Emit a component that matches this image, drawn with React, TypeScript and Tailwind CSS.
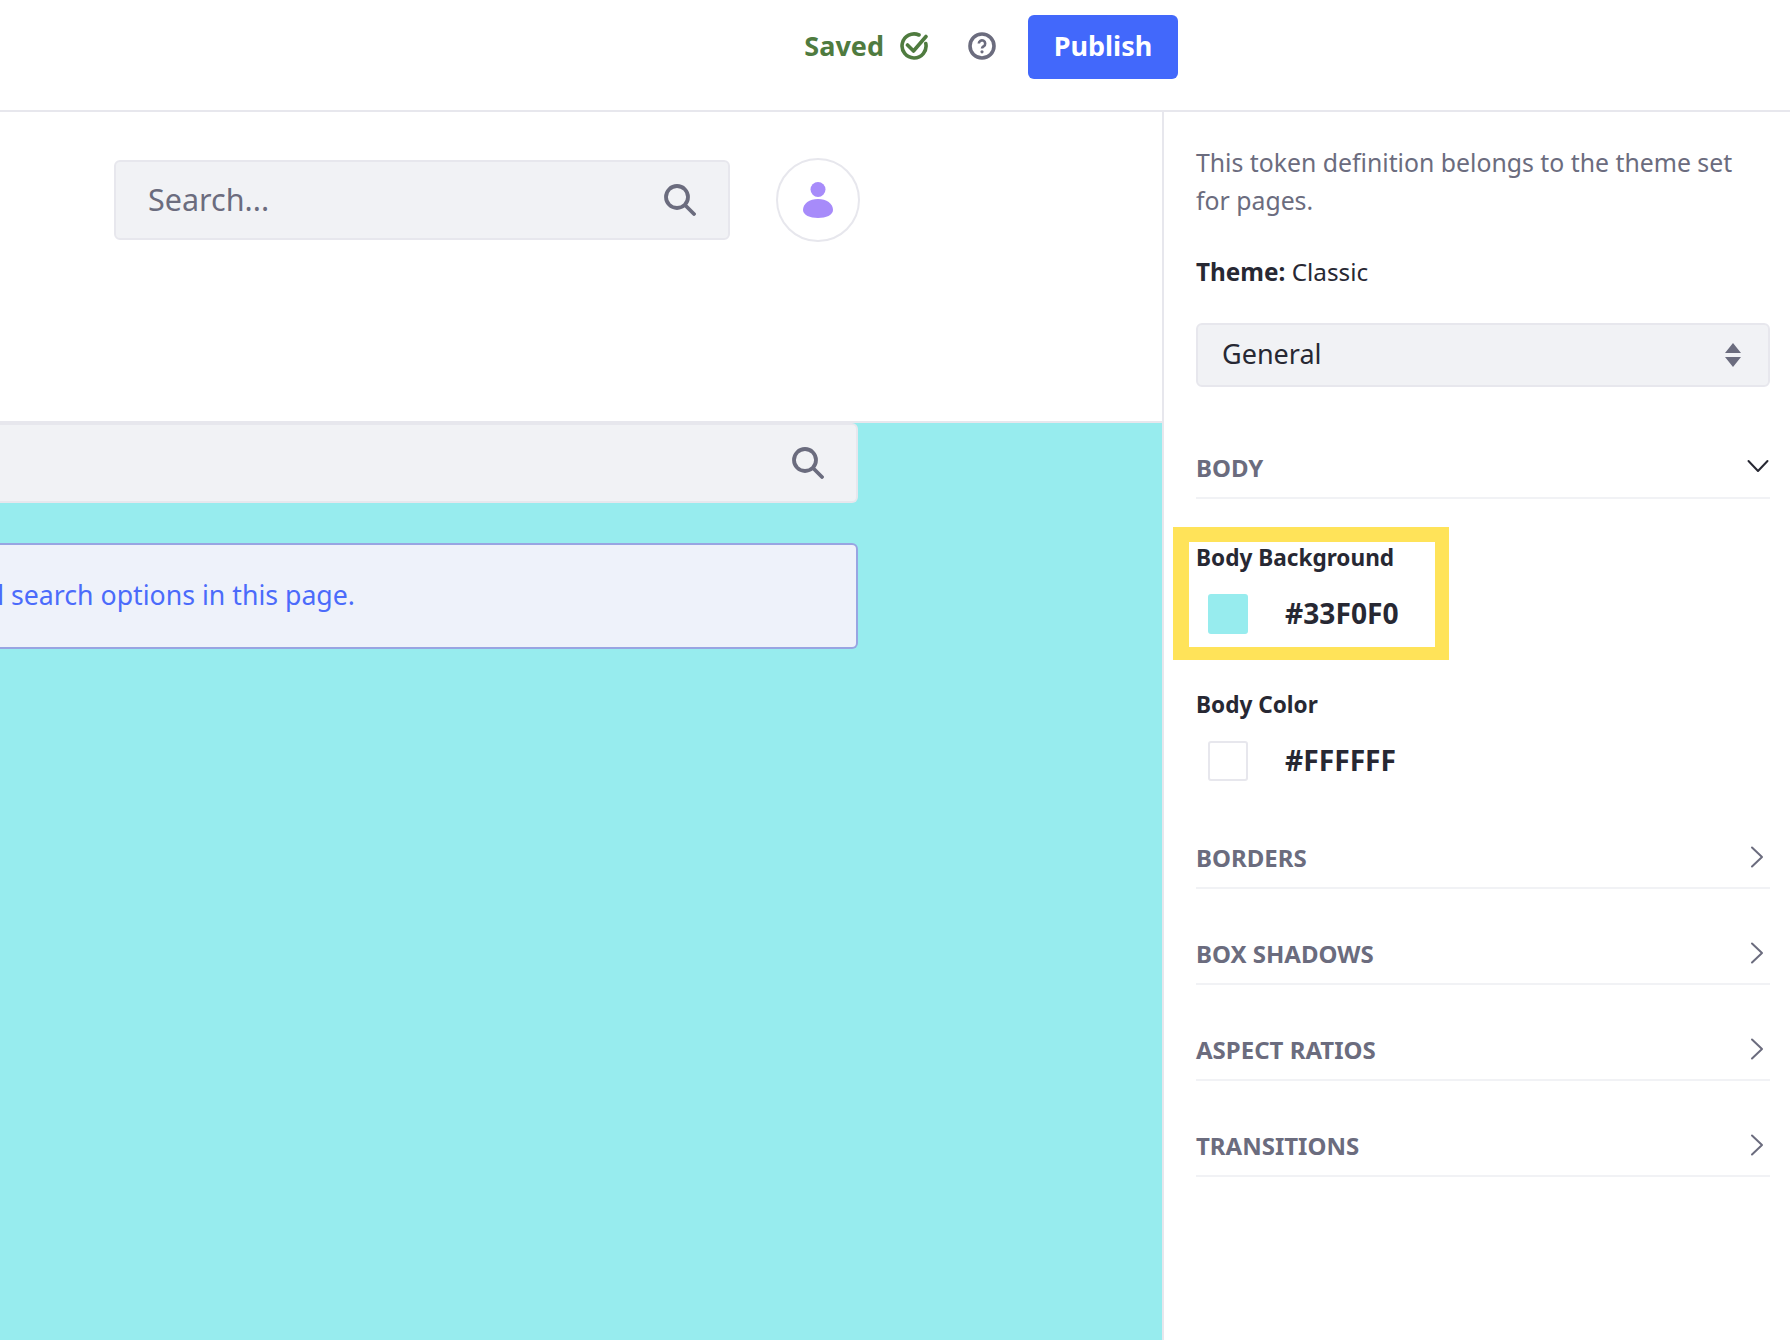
const FONT = "font-['Noto_Sans',sans-serif]";

function SearchIcon({ className }: { className?: string }) {
  return (
    <svg viewBox="0 0 32 32" className={className} fill="none" stroke="#6b6c7e" strokeWidth="3.8" strokeLinecap="round">
      <circle cx="13" cy="13" r="11" />
      <path d="M21.5 21.5 30 30" />
    </svg>
  );
}

function ChevronRight() {
  return (
    <svg viewBox="0 0 14 22" className="h-[22px] w-[14px] mr-[6px] -mt-[2px]" fill="none" stroke="#6b6c7e" strokeWidth="2" strokeLinecap="round" strokeLinejoin="round">
      <path d="M2 1.5 12 11 2 20.5" />
    </svg>
  );
}

function Section({ label }: { label: string }) {
  return (
    <div className="flex h-[96px] items-end">
      <div className="flex h-[60px] w-full items-center justify-between border-b-2 border-[#f1f2f5] pb-[1px]">
        <span className="text-[24px] font-bold text-[#6b6c7e]">{label}</span>
        <ChevronRight />
      </div>
    </div>
  );
}

function Token({ label, value, swatch }: { label: string; value: string; swatch: string }) {
  return (
    <div className="w-[240px]">
      <div className="h-[30px] whitespace-nowrap pt-[1px] text-[22.6px] font-bold leading-[30px] text-[#272833]">{label}</div>
      <div className="mt-[22px] flex items-center gap-[37px] pl-[12px]">
        <span className={`h-[40px] w-[40px] rounded-[3px] ${swatch}`} />
        <span className="-mt-[2px] text-[28.2px] font-bold leading-[38px] text-[#272833]">{value}</span>
      </div>
    </div>
  );
}

export default function App() {
  return (
    <div className={`flex h-[1340px] w-[1790px] flex-col overflow-hidden bg-white ${FONT}`}>
      <header className="flex h-[112px] shrink-0 items-center justify-end border-b-2 border-[#e7e7ed] pr-[612px] pb-[16px]">
        <span className="-mt-[2px] text-[27px] font-bold text-[#4f7b3f]">Saved</span>
        <svg viewBox="0 0 28 28" className="-mt-[2px] ml-[16px] h-[28px] w-[28px]" fill="none" stroke="#4f7b3f" strokeWidth="3.6" strokeLinecap="round" strokeLinejoin="round">
          <path d="M25.8 11.5A12 12 0 1 1 19 3" />
          <path d="M7.5 13l6 6L26 4.5" />
        </svg>
        <svg viewBox="0 0 28 28" className="-mt-[2px] ml-[40px] h-[28px] w-[28px]" fill="none" stroke="#6b6c7e" strokeWidth="3.6">
          <circle cx="14" cy="14" r="12" />
          <path d="M10.8 11.6a3.2 3.2 0 1 1 5 2.6c-1.1.8-1.8 1.2-1.8 2.2" strokeWidth="2.6" />
          <circle cx="14" cy="19.8" r="1.6" fill="#6b6c7e" stroke="none" />
        </svg>
        <button className="ml-[32px] h-[64px] w-[150px] rounded-[6px] bg-[#4268fb] pb-[2px] text-[27px] font-bold text-white">Publish</button>
      </header>

      <div className="flex min-h-0 flex-1">
        <main className="flex w-[1164px] shrink-0 flex-col border-r-2 border-[#e7e7ed]">
          <div className="flex h-[309px] shrink-0 items-start gap-[46px] pl-[114px] pt-[46px]">
            <div className="mt-[2px] flex h-[80px] w-[616px] items-center justify-between rounded-[6px] border-2 border-[#e7e7ed] bg-[#f1f2f5] pl-[32px] pr-[32px]">
              <span className="text-[30.5px] text-[#6b6c7e]">Search...</span>
              <SearchIcon className="h-[32px] w-[32px]" />
            </div>
            <div className="flex h-[84px] w-[84px] items-center justify-center rounded-full border-2 border-[#e7e7ed]">
              <svg viewBox="0 0 30 36" className="h-[36px] w-[30px]" fill="#a78bfa">
                <circle cx="15" cy="7.5" r="7.5" />
                <path d="M0 28C0 21.500 6.500 17 15 17S30 21.500 30 28C30 33 23 36 15 36S0 33 0 28Z" />
              </svg>
            </div>
          </div>
          <div className="flex-1 border-t-2 border-[#e7e7ed] bg-[#97ecee]">
            <div className="flex h-[80px] w-[858px] items-center justify-end rounded-r-[6px] border-2 border-l-0 border-[#e7e7ed] bg-[#f1f2f5] pr-[32px]">
              <SearchIcon className="h-[32px] w-[32px]" />
            </div>
            <div className="mt-[40px] flex h-[106px] w-[858px] items-center justify-end rounded-r-[6px] border-2 border-l-0 border-[#98a5e2] bg-[#eef2fa] pr-[501px]">
              <span className="-mt-[2px] whitespace-nowrap text-[26.7px] text-[#4b6bfb]">l search options in this page.</span>
            </div>
          </div>
        </main>

        <aside className="flex-1 pl-[32px] pr-[20px] pt-[31px]">
          <p className="whitespace-nowrap text-[24.8px] leading-[38px] text-[#6b6c7e]">This token definition belongs to the theme set<br />for pages.</p>
          <p className="mt-[34px] text-[24.3px] leading-[38px] text-[#272833]"><b>Theme:</b> Classic</p>
          <div className="mt-[32px] flex h-[64px] items-center justify-between rounded-[6px] border-2 border-[#e7e7ed] bg-[#f1f2f5] pl-[24px] pr-[27px]">
            <span className="-mt-[2px] text-[27px] text-[#272833]">General</span>
            <svg viewBox="0 0 16 24" className="h-[24px] w-[16px]" fill="#6b6c7e">
              <path d="M8 0l8 10H0zM8 24 0 14h16z" />
            </svg>
          </div>
          <div className="flex h-[112px] items-end">
            <div className="flex h-[60px] w-full items-center justify-between border-b-2 border-[#f1f2f5]">
              <span className="text-[24px] font-bold text-[#6b6c7e]">BODY</span>
              <svg viewBox="0 0 22 14" className="-mt-[4px] mr-[1px] h-[14px] w-[22px]" fill="none" stroke="#272833" strokeWidth="2" strokeLinecap="round" strokeLinejoin="round">
                <path d="M1.500 2 11 12 20.500 2" />
              </svg>
            </div>
          </div>
          <div className="relative mt-[43px]">
            <Token label="Body Background" value="#33F0F0" swatch="bg-[#97ecee]" />
            <div className="absolute -left-[23px] -top-[15px] h-[133px] w-[276px] border-b-[13px] border-l-[16px] border-r-[14px] border-t-[15px] border-[#ffe359]" />
          </div>
          <div className="mt-[55px]">
            <Token label="Body Color" value="#FFFFFF" swatch="border-2 border-[#e7e7ed]" />
          </div>
          <div className="mt-[12px]">
            <Section label="BORDERS" />
            <Section label="BOX SHADOWS" />
            <Section label="ASPECT RATIOS" />
            <Section label="TRANSITIONS" />
          </div>
        </aside>
      </div>
    </div>
  );
}
